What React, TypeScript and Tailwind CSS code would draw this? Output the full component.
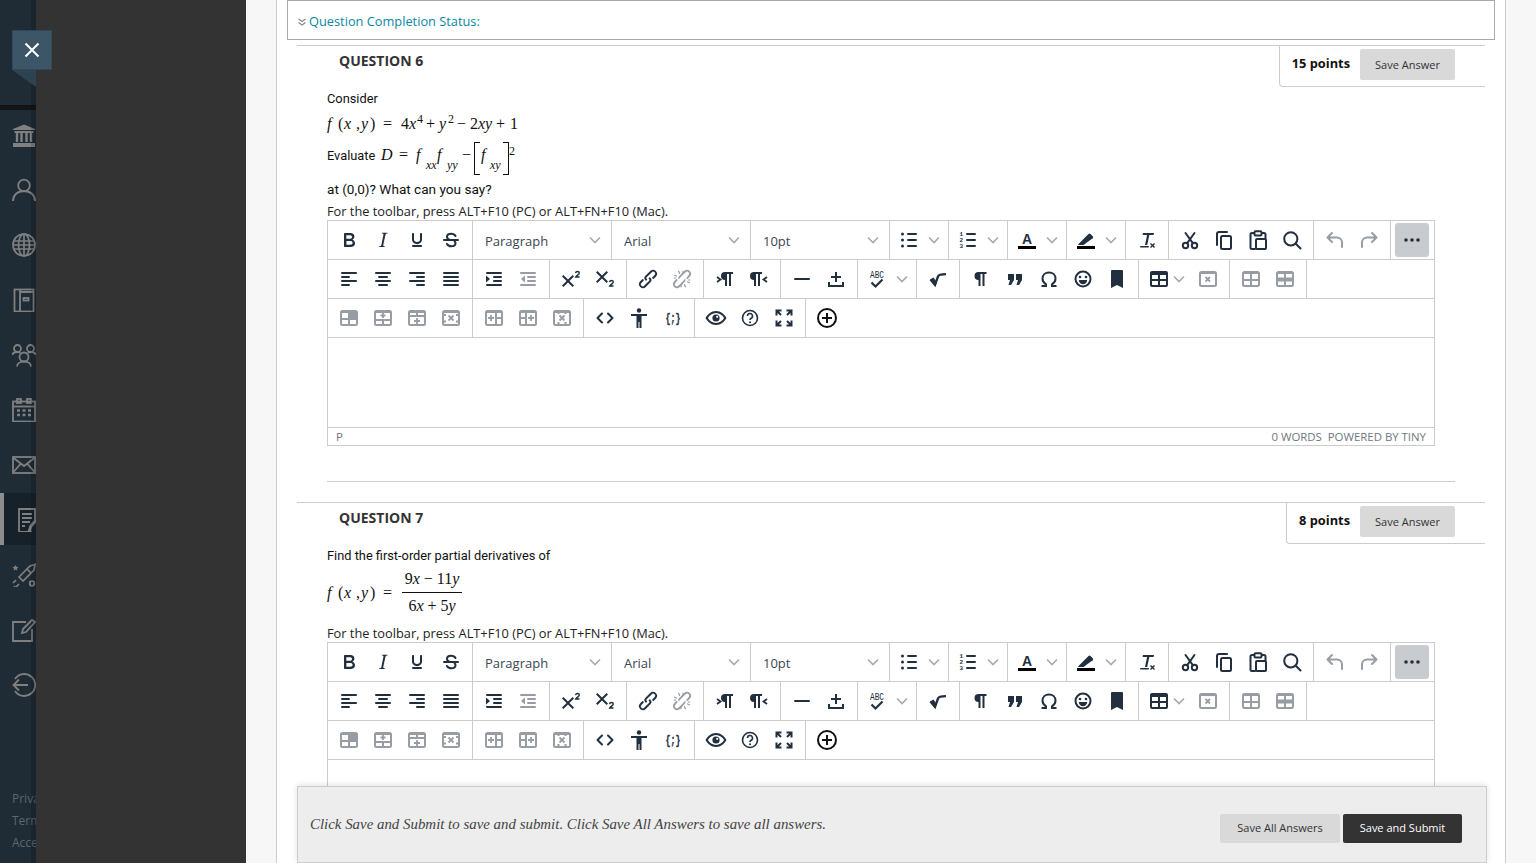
import React from 'react';

const OPEN = { fontFamily: '"Open Sans", sans-serif' };

const Svg = ({ children, size = 24 }: { children: React.ReactNode; size?: number }) => (
  <svg width={size} height={size} viewBox="0 0 24 24" fill="currentColor" stroke="none">{children}</svg>
);
const S = (p: any) => <path fill="none" stroke="currentColor" strokeWidth={2} strokeLinecap="round" strokeLinejoin="round" {...p} />;
const Bars = ({ rows }: { rows: number[][] }) => (
  <>{rows.map((r, i) => <rect key={i} x={r[0]} y={r[1]} width={r[2]} height={2} rx={1} />)}</>
);

const Frame = ({ children }: { children?: React.ReactNode }) => (
  <>
    <rect x="4" y="5" width="16" height="14" rx="1.5" fill="none" stroke="currentColor" strokeWidth="2" />
    <rect x="4" y="5" width="16" height="2" />
    {children}
  </>
);
const Grid = () => <S d="M12 5v14M4 13h16" strokeLinecap="butt" />;

const Pilcrow = ({ dx = 0 }: { dx?: number }) => <path transform={`translate(${dx} 0)`} d="M10 5h9v2h-2v12h-2V7h-2v12h-2v-6a4 4 0 0 1 0-8z" />;
const LINK = 'M6.2 12.3a1 1 0 0 1 1.4 1.4l-2 2a2 2 0 1 0 2.8 2.8l4.8-4.8a1 1 0 0 0 0-1.4 1 1 0 1 1 1.4-1.3 2.9 2.9 0 0 1 0 4L9.8 19.9a3.9 3.9 0 0 1-5.6-5.6l2-2zm11.6-.6a1 1 0 0 1-1.4-1.4l2-2a2 2 0 1 0-2.8-2.8L10.6 10.3a1 1 0 0 0 0 1.4 1 1 0 1 1-1.4 1.3 2.9 2.9 0 0 1 0-4l5-4.9a3.9 3.9 0 0 1 5.6 5.6l-2 2z';

const ICONS: Record<string, React.ReactNode> = {
  bold: <path d="M7.8 19c-.3 0-.5 0-.6-.2l-.2-.5V5.7c0-.2 0-.4.2-.5l.6-.2h5c1.5 0 2.7.3 3.5 1 .7.6 1.1 1.4 1.1 2.5a3 3 0 0 1-.6 1.9c-.4.6-1 1-1.6 1.2.4.1.9.3 1.3.6s.8.7 1 1.2c.4.4.5 1 .5 1.6 0 1.3-.4 2.3-1.3 3-.8.7-2.1 1-3.8 1H7.8zm5-8.3c.6 0 1.2-.1 1.6-.5.4-.3.6-.7.6-1.3 0-1.1-.8-1.7-2.3-1.7H9.3v3.5h3.4zm.5 6c.7 0 1.3-.1 1.7-.4.4-.4.6-.9.6-1.5s-.2-1-.7-1.4c-.4-.3-1-.4-2-.4H9.4v3.8h4z" />,
  italic: <path d="M16.7 4.7l-.1.9h-.3c-.6 0-1 0-1.4.3-.3.3-.4.6-.5 1.1l-2.1 9.8v.6c0 .5.4.8 1.4.8h.2l-.2.8H8l.2-.8h.2c1.1 0 1.8-.5 2-1.5l2-9.8.1-.5c0-.6-.4-.8-1.4-.8h-.3l.2-.9h5.8z" />,
  underline: <path d="M16 5c.6 0 1 .4 1 1v5.5a4 4 0 0 1-.4 1.8l-1 1.4a5.3 5.3 0 0 1-5.5 1 5 5 0 0 1-1.6-1c-.5-.4-.8-.9-1.1-1.4a4 4 0 0 1-.4-1.8V6c0-.6.4-1 1-1s1 .4 1 1v5.5c0 .3 0 .6.2 1l.6.7a3.3 3.3 0 0 0 2.2.8 3.4 3.4 0 0 0 2.2-.8c.3-.2.4-.5.6-.8l.2-.9V6c0-.6.4-1 1-1zM8 17h8c.6 0 1 .4 1 1s-.4 1-1 1H8a1 1 0 0 1 0-2z" />,
  strike: <><S d="M16.5 8c-.8-1.5-2.3-2.3-4.3-2.3-2.6 0-4.2 1.3-4.2 3.1 0 1.2.6 2.2 2.4 2.9M8 16c.8 1.5 2.3 2.3 4.3 2.3 2.6 0 4.2-1.2 4.2-3 0-.8-.3-1.5-.9-2.1" /><rect x="4" y="11" width="16" height="2" rx="1" /></>,
  bullist: <><circle cx="5.5" cy="6" r="1.5" /><circle cx="5.5" cy="12" r="1.5" /><circle cx="5.5" cy="18" r="1.5" /><Bars rows={[[10, 5, 10], [10, 11, 10], [10, 17, 10]]} /></>,
  numlist: <><text x="3.6" y="8" fontSize="6" fontFamily="Liberation Mono" fontWeight="700">1</text><text x="3.6" y="14" fontSize="6" fontFamily="Liberation Mono" fontWeight="700">2</text><text x="3.6" y="20" fontSize="6" fontFamily="Liberation Mono" fontWeight="700">3</text><Bars rows={[[10, 5, 10], [10, 11, 10], [10, 17, 10]]} /></>,
  textcolor: <><text x="12" y="16" textAnchor="middle" fontSize="14" fontWeight="700" fontFamily="Liberation Sans">A</text><rect x="3" y="18" width="18" height="3" fill="#000" /></>,
  highlight: <><path d="M5 15.5L14.5 6a1.5 1.5 0 0 1 2 0l2.2 2.2a1.5 1.5 0 0 1 0 2L9.5 17H4z" /><rect x="3" y="18" width="18" height="3" fill="#000" /></>,
  clear: <><path d="M8 5h11l-.4 2h-4.3l-2.1 10H10l2.1-10H7.6z" /><rect x="5" y="18" width="9" height="1.6" rx=".8" /><path d="M15.5 15.5l4 4M19.5 15.5l-4 4" stroke="currentColor" strokeWidth="1.4" /></>,
  cut: <><circle cx="7.5" cy="17.5" r="2.7" fill="none" stroke="currentColor" strokeWidth="2" /><circle cx="16.5" cy="17.5" r="2.7" fill="none" stroke="currentColor" strokeWidth="2" /><S d="M9 15.3L16.5 5M15 15.3L7.5 5" /></>,
  copy: <><rect x="9" y="8" width="10" height="13" rx="1.5" fill="none" stroke="currentColor" strokeWidth="2" /><S d="M15 4H7a2 2 0 0 0-2 2v11" /></>,
  paste: <><S d="M8 5H6a1.5 1.5 0 0 0-1.5 1.5v13A1.5 1.5 0 0 0 6 21h3M16 5h2a1.5 1.5 0 0 1 1.5 1.5V10" /><rect x="8.5" y="3.2" width="7" height="4.2" rx="1" fill="none" stroke="currentColor" strokeWidth="2" /><rect x="10" y="11" width="10" height="10" rx="1" fill="none" stroke="currentColor" strokeWidth="2" /></>,
  search: <><circle cx="10.8" cy="10.8" r="6.6" fill="none" stroke="currentColor" strokeWidth="2" /><S d="M15.8 15.8L20.5 20.5" /></>,
  undo: <S d="M9 5L4.5 9.5 9 14M5 9.5h9a5 5 0 0 1 5 5v4.5" />,
  redo: <S d="M15 5l4.5 4.5L15 14M19 9.5h-9a5 5 0 0 0-5 5v4.5" />,
  more: <><circle cx="6" cy="12" r="1.8" /><circle cx="12" cy="12" r="1.8" /><circle cx="18" cy="12" r="1.8" /></>,
  alignleft: <Bars rows={[[4, 5, 16], [4, 9, 9], [4, 13, 16], [4, 17, 9]]} />,
  aligncenter: <Bars rows={[[4, 5, 16], [7, 9, 10], [4, 13, 16], [7, 17, 10]]} />,
  alignright: <Bars rows={[[4, 5, 16], [11, 9, 9], [4, 13, 16], [11, 17, 9]]} />,
  justify: <Bars rows={[[4, 5, 16], [4, 9, 16], [4, 13, 16], [4, 17, 16]]} />,
  indent: <><Bars rows={[[4, 5, 16], [11, 9, 9], [11, 13, 9], [4, 17, 16]]} /><path d="M4 8.5l4 3.5-4 3.5z" /></>,
  outdent: <><Bars rows={[[4, 5, 16], [11, 9, 9], [11, 13, 9], [4, 17, 16]]} /><path d="M9 8.5L5 12l4 3.5z" /></>,
  sup: <><path d="M15 9.4L10.4 14l4.6 4.6-1.4 1.4L9 15.4 4.4 20 3 18.6 7.6 14 3 9.4 4.4 8 9 12.6 13.6 8z" /><path d="M16.5 6.2c.2-1 1-1.7 2-1.7s1.8.7 1.8 1.6c0 1.4-2.4 2.2-3.5 3.9h3.7" fill="none" stroke="currentColor" strokeWidth="1.4" /></>,
  sub: <><path d="M15 5.4L10.4 10l4.6 4.6-1.4 1.4L9 11.4 4.4 16 3 14.6 7.6 10 3 5.4 4.4 4 9 8.6 13.6 4z" /><path d="M16.5 15.2c.2-1 1-1.7 2-1.7s1.8.7 1.8 1.6c0 1.4-2.4 2.2-3.5 3.9h3.7" fill="none" stroke="currentColor" strokeWidth="1.4" /></>,
  link: <path d={LINK} />,
  unlink: <><path d={LINK} /><path d="M7 17L17 7" stroke="#fff" strokeWidth="4" /><path d="M4 8l3 1.2M8.5 3.8L9.7 7M20 16l-3-1.2M15.5 20.2L14.3 17M3.8 11h2.4M13 3.8v2.4M20.2 13h-2.4M11 20.2v-2.4" stroke="currentColor" strokeWidth="1.2" /></>,
  ltr: <><Pilcrow dx={1} /><path d="M4 10l3.500 2.500L4 15" fill="none" stroke="currentColor" strokeWidth="1.800" /></>,
  rtl: <><Pilcrow dx={-4} /><path d="M20 10l-3.500 2.500L20 15" fill="none" stroke="currentColor" strokeWidth="1.800" /></>,
  hr: <rect x="4" y="11" width="16" height="2" rx="1" />,
  pagebreak: <><path d="M11 5h2v4h4v2h-4v4h-2v-4H7V9h4z" /><path d="M4 15h2v3h12v-3h2v5H4z" /></>,
  spell: <><text x="12" y="10.500" textAnchor="middle" fontSize="10.500" textLength="14" lengthAdjust="spacingAndGlyphs" fontFamily="Liberation Mono">ABC</text><path d="M6.500 15.500l4 4L17.500 12.500" fill="none" stroke="currentColor" strokeWidth="2.200" /></>,
  sqrt: <><path d="M4.500 12.500L9 18l3-8.500c.5-1.500 2-2.300 8-2.300" fill="none" stroke="currentColor" strokeWidth="2.300" /><path d="M4 12.500l3.500-2 3.500 5L9 19z" /></>,
  para: <Pilcrow dx={-1.5} />,
  quote: <path d="M5 7h6v6l-3 5H5.5L7 13H5zM13 7h6v6l-3 5h-2.500L15 13h-2z" />,
  omega: <S d="M4.5 19H9v-1.700C6.800 16 5.500 14 5.500 11.500 5.500 8 8.200 5.500 12 5.500s6.500 2.500 6.500 6c0 2.500-1.300 4.500-3.500 5.800V19h4.500" strokeLinecap="butt" strokeLinejoin="miter" />,
  emoji: <><circle cx="12" cy="12" r="7.500" fill="none" stroke="currentColor" strokeWidth="2" /><circle cx="9" cy="10" r="1.300" /><circle cx="15" cy="10" r="1.300" /><path d="M7.800 13h8.400a4.200 4.200 0 0 1-8.400 0z" /></>,
  bookmark: <path d="M6 4a1 1 0 0 1 1-1h10a1 1 0 0 1 1 1v17l-6-3-6 3z" />,
  table: <path fillRule="evenodd" d="M19 4a2 2 0 0 1 2 2v12a2 2 0 0 1-2 2H5a2 2 0 0 1-2-2V6c0-1.100.900-2 2-2h14zM5 14v4h6v-4H5zm14 0h-6v4h6v-4zm0-6h-6v4h6V8zM5 12h6V8H5v4z" />,
  tdel: <Frame><path d="M9.500 10l4.500 4.500M14 10l-4.500 4.500" stroke="currentColor" strokeWidth="1.800" /></Frame>,
  tprops: <Frame><Grid /></Frame>,
  tcell: <Frame><rect x="4" y="10.500" width="16" height="4" /><path d="M12 5v14" stroke="currentColor" strokeWidth="2" /></Frame>,
  t1: <Frame><Grid /><rect x="12" y="5" width="8" height="8" /></Frame>,
  t2: <Frame><path d="M4 14h16M12 14v5" stroke="currentColor" strokeWidth="2" /><path d="M12 7v5M9.500 9.500h5" stroke="currentColor" strokeWidth="1.800" /></Frame>,
  t3: <Frame><path d="M4 10h16M12 5v5" stroke="currentColor" strokeWidth="2" /><path d="M12 12v6M9 15h6" stroke="currentColor" strokeWidth="1.800" /></Frame>,
  t4: <Frame><path d="M4 9h3M17 9h3M4 15.500h3M17 15.500h3" stroke="currentColor" strokeWidth="2" /><path d="M9.500 9.500l5 5M14.500 9.500l-5 5" stroke="currentColor" strokeWidth="1.800" /></Frame>,
  t5: <Frame><path d="M14 5v14M14 12h6" stroke="currentColor" strokeWidth="2" /><path d="M9 9v6M6 12h6" stroke="currentColor" strokeWidth="1.800" /></Frame>,
  t6: <Frame><path d="M10 5v14M4 12h6" stroke="currentColor" strokeWidth="2" /><path d="M15 9v6M12 12h6" stroke="currentColor" strokeWidth="1.800" /></Frame>,
  t7: <Frame><path d="M8.500 5v3M15.500 5v3M8.500 16v3M15.500 16v3" stroke="currentColor" strokeWidth="2" /><path d="M9.500 9.500l5 5M14.500 9.500l-5 5" stroke="currentColor" strokeWidth="1.800" /></Frame>,
  code: <S d="M9 7.500L4.500 12 9 16.500M15 7.500l4.500 4.500-4.500 4.500" />,
  a11y: <><circle cx="12" cy="4.500" r="2.200" /><path d="M4 8h16v2h-5.500v12h-2v-6h-1v6h-2V10H4z" /></>,
  template: <text x="12" y="15.500" textAnchor="middle" fontSize="12" fontWeight="700" textLength="15" lengthAdjust="spacingAndGlyphs" stroke="currentColor" strokeWidth=".3" fontFamily="Liberation Mono">{'{;}'}</text>,
  eye: <><path fillRule="evenodd" d="M12 5c4.800 0 8.700 3.400 10.500 7-1.800 3.600-5.700 7-10.500 7S3.300 15.600 1.500 12C3.300 8.400 7.200 5 12 5zm0 2c-3.500 0-6.500 2.300-8.100 5 1.600 2.700 4.600 5 8.100 5s6.500-2.300 8.100-5c-1.600-2.700-4.600-5-8.100-5z" /><circle cx="12" cy="12" r="3.600" /><circle cx="13.200" cy="10.800" r="1.100" fill="#fff" /></>,
  help: <><circle cx="12" cy="12" r="7.500" fill="none" stroke="currentColor" strokeWidth="1.600" /><path d="M9.500 10a2.500 2.500 0 1 1 3.700 2.200c-.8.500-1.200 1-1.200 1.800" fill="none" stroke="currentColor" strokeWidth="1.600" /><circle cx="12" cy="16.300" r="1" /></>,
  fullscreen: <g fill="none" stroke="currentColor" strokeWidth="2"><path d="M4.500 9.500V4.500h5M4.500 4.500l4.500 4.500M14.500 4.500h5v5M19.500 4.500L15 9M4.500 14.500v5h5M4.500 19.500L9 15M14.500 19.500h5v-5M19.500 19.500L15 15" /></g>,
  plus: <g color="#111"><circle cx="12" cy="12" r="9" fill="none" stroke="currentColor" strokeWidth="2" /><path d="M12 7v10M7 12h10" stroke="currentColor" strokeWidth="2" /></g>,
};

const Btn = ({ n, off }: { n: string; off?: boolean }) => (
  <div className={`w-[34px] h-[34px] flex items-center justify-center ${off ? 'text-[#989da3]' : 'text-[#222f3e]'}`}>
    <Svg>{ICONS[n]}</Svg>
  </div>
);

const Chev = () => (
  <svg width="12" height="8" viewBox="0 0 12 8" className="text-[#a6aaaf] shrink-0">
    <path d="M1 1.500L6 6.500 11 1.500" fill="none" stroke="currentColor" strokeWidth="1.600" />
  </svg>
);

const Split = ({ n }: { n: string }) => (
  <div className="flex items-center text-[#222f3e] h-[34px]">
    <div className="w-[30px] flex justify-center shrink-0"><Svg>{ICONS[n]}</Svg></div>
    <div className="w-[20px] flex justify-center shrink-0"><Chev /></div>
  </div>
);

const Group = ({ children, last }: { children: React.ReactNode; last?: boolean }) => (
  <div className={`flex items-center px-1 ${last ? '' : 'border-r border-[#ccc]'}`}>{children}</div>
);

const Select = ({ label }: { label: string }) => (
  <Group>
    <div className="w-[130px] h-[34px] flex items-center justify-between pl-2 pr-[6px] text-[13px] text-[#3a4653]" style={OPEN}>
      <span className="mt-1">{label}</span><Chev />
    </div>
  </Group>
);

const Row = ({ children }: { children: React.ReactNode }) => (
  <div className="flex h-[39px] border-b border-[#ccc] bg-white">{children}</div>
);

const Btns = ({ names, off }: { names: string[]; off?: boolean }) => (
  <Group>{names.map((n) => <Btn key={n} n={n} off={off} />)}</Group>
);

const Editor = ({ status }: { status?: boolean }) => (
  <div className="border border-[#ccc] border-b-0 ml-[30px] mr-[50px] bg-white">
    <Row>
      <Btns names={['bold', 'italic', 'underline', 'strike']} />
      <Select label="Paragraph" />
      <Select label="Arial" />
      <Select label="10pt" />
      <Group><Split n="bullist" /></Group>
      <Group><Split n="numlist" /></Group>
      <Group><Split n="textcolor" /></Group>
      <Group><Split n="highlight" /></Group>
      <Btns names={['clear']} />
      <Btns names={['cut', 'copy', 'paste', 'search']} />
      <Btns names={['undo', 'redo']} off />
      <Group last>
        <div className="w-[34px] h-[34px] bg-[#c8cbcf] rounded-[3px] flex items-center justify-center text-[#222f3e]"><Svg>{ICONS.more}</Svg></div>
      </Group>
    </Row>
    <Row>
      <Btns names={['alignleft', 'aligncenter', 'alignright', 'justify']} />
      <Group><Btn n="indent" /><Btn n="outdent" off /></Group>
      <Btns names={['sup', 'sub']} />
      <Group><Btn n="link" /><Btn n="unlink" off /></Group>
      <Btns names={['ltr', 'rtl']} />
      <Btns names={['hr', 'pagebreak']} />
      <Group><Split n="spell" /></Group>
      <Btns names={['sqrt']} />
      <Btns names={['para', 'quote', 'omega', 'emoji', 'bookmark']} />
      <Group>
        <div className="flex items-center h-[34px] w-[48px] text-[#222f3e]">
          <div className="w-[32px] flex justify-center shrink-0"><Svg>{ICONS.table}</Svg></div>
          <div className="w-[8px] flex justify-center shrink-0"><Chev /></div>
        </div>
        <Btn n="tdel" off />
      </Group>
      <Btns names={['tprops', 'tcell']} off />
    </Row>
    <Row>
      <Btns names={['t1', 't2', 't3', 't4']} off />
      <Btns names={['t5', 't6', 't7']} off />
      <Btns names={['code', 'a11y', 'template']} />
      <Btns names={['eye', 'help', 'fullscreen']} />
      <Group last><Btn n="plus" /></Group>
    </Row>
    <div className="h-[89px] bg-white" />
    {status && (
      <div className="h-[19px] border-y border-[#ccc] flex items-center justify-between px-2 text-[11.4px] text-[#6f7781]" style={OPEN}>
        <span>P</span>
        <span className="whitespace-pre">0 WORDS  POWERED BY TINY</span>
      </div>
    )}
  </div>
);

const Tok = ({ w, up = 0, small, children, it }: { w: number; up?: number; small?: boolean; it?: boolean; children: React.ReactNode }) => (
  <span
    className={`inline-block shrink-0 ${small ? 'text-[12px]' : 'text-[16px]'} ${it ? 'italic' : ''}`}
    style={{ width: w, position: up ? 'relative' : undefined, top: up ? -up : undefined }}
  >
    {children}
  </span>
);

const FXY = () => (
  <>
    <Tok w={11} it>f</Tok>
    <Tok w={6}>(</Tok>
    <Tok w={12} it>x</Tok>
    <Tok w={5}>,</Tok>
    <Tok w={9} it>y</Tok>
    <Tok w={13}>)</Tok>
    <Tok w={18}>=</Tok>
  </>
);

const Heading = ({ n }: { n: number }) => (
  <div className="pl-[42px] pt-[5px] text-[14px] leading-[20px] font-bold text-[#333]" style={OPEN}>QUESTION {n}</div>
);

const Points = ({ label }: { label: string }) => (
  <div className="h-[41px] border-l border-b border-[#ccc] rounded-bl-[4px] flex pl-3 pr-[30px] gap-[10px]" style={OPEN}>
    <span className="text-[12.8px] font-bold text-[#111] leading-[34px]">{label}</span>
    <button className="mt-[3px] w-[95px] h-[31px] pt-[2px] bg-[#d9d9d9] rounded-[2px] text-[11px] text-[#333]">Save Answer</button>
  </div>
);

const QHead = ({ n, points }: { n: number; points: string }) => (
  <div className="flex justify-between h-[41px]"><Heading n={n} /><Points label={points} /></div>
);

const Hint = () => (
  <div className="pl-[30px] h-[18px] leading-[18px] text-[12.8px] text-[#222]" style={OPEN}>
    For the toolbar, press ALT+F10 (PC) or ALT+FN+F10 (Mac).
  </div>
);

const sans = { fontFamily: 'Roboto, "Liberation Sans", sans-serif' };
const times = { fontFamily: '"Liberation Serif", serif' };

const Question6 = () => (
  <section className="border-t border-[#ccc]">
    <QHead n={6} points="15 points" />
    <div className="mt-[2px] pl-[30px] h-[18px] leading-[20px] text-[12.8px] text-[#111]" style={sans}>Consider</div>
    <div className="mt-[6px] pl-[30px] h-[22px] flex items-center text-[#111]" style={times}>
      <FXY />
      <Tok w={8}>4</Tok>
      <Tok w={8} it>x</Tok>
      <Tok w={9} up={5} small>4</Tok>
      <Tok w={13}>+</Tok>
      <Tok w={9} it>y</Tok>
      <Tok w={9} up={5} small>2</Tok>
      <Tok w={13}>−</Tok>
      <Tok w={8}>2</Tok>
      <Tok w={18} it>xy</Tok>
      <Tok w={14}>+</Tok>
      <Tok w={8}>1</Tok>
    </div>
    <div className="mt-[3px] pl-[30px] h-[38px] flex items-center text-[#111]" style={times}>
      <span className="w-[54px] shrink-0 text-[12.8px] -mt-[3px]" style={sans}>Evaluate</span>
      <Tok w={18} up={2} it>D</Tok>
      <Tok w={17} up={2}>=</Tok>
      <Tok w={10} up={2} it>f</Tok>
      <Tok w={11} up={-8} small it>xx</Tok>
      <Tok w={10} up={2} it>f</Tok>
      <Tok w={15} up={-8} small it>yy</Tok>
      <Tok w={12} up={2}>−</Tok>
      <span className="w-[6px] h-[33px] mt-[3px] mr-px border-l border-y border-[#111] shrink-0" />
      <Tok w={9} up={2} it>f</Tok>
      <Tok w={13} up={-8} small it>xy</Tok>
      <span className="w-[6px] h-[33px] mt-[3px] border-r border-y border-[#111] shrink-0" />
      <Tok w={8} up={6} small>2</Tok>
    </div>
    <div className="mt-1 pl-[30px] h-[18px] leading-[18px] text-[13.6px] text-[#111]" style={sans}>at (0,0)? What can you say?</div>
    <div className="mt-1"><Hint /></div>
    <Editor status />
    <div className="mt-[35px] mx-[30px] border-t border-[#ccc]" />
  </section>
);

const Question7 = () => (
  <section className="mt-5 border-t border-[#ccc]">
    <QHead n={7} points="8 points" />
    <div className="mt-[2px] pl-[30px] h-[18px] leading-[20px] text-[12.8px] text-[#111]" style={sans}>Find the first-order partial derivatives of</div>
    <div className="mt-[6px] pl-[30px] h-[46px] flex items-center text-[#111]" style={times}>
      <FXY />
      <span className="ml-px w-[60px] flex flex-col items-center shrink-0 text-[16px]">
        <span className="h-[23px] leading-[18px] w-full text-center border-b border-[#111]">9<i>x</i> − 11<i>y</i></span>
        <span className="h-[23px] leading-[26px]">6<i>x</i> + 5<i>y</i></span>
      </span>
    </div>
    <div className="mt-2"><Hint /></div>
    <Editor />
  </section>
);

const NAV: Record<string, React.ReactNode> = {
  bank: <><path d="M12 1.500L23 6v1H1V6z" /><path d="M2.500 9h19M1 21h22M1 23h22" stroke="currentColor" strokeWidth="2" /><path d="M5 10v9M9.500 10v9M14.500 10v9M19 10v9" stroke="currentColor" strokeWidth="2.400" /></>,
  user: <><circle cx="12" cy="7.500" r="5.800" fill="none" stroke="currentColor" strokeWidth="1.800" /><path d="M1 23c0-6 4.500-10 11-10s11 4 11 10" fill="none" stroke="currentColor" strokeWidth="1.800" /></>,
  globe: <g fill="none" stroke="currentColor" strokeWidth="1.700"><circle cx="12" cy="12" r="11" /><ellipse cx="12" cy="12" rx="5.500" ry="11" /><path d="M12 1v22M1.500 8h21M1.500 12h21M1.500 16h21" /></g>,
  book: <g fill="none" stroke="currentColor" strokeWidth="1.800"><rect x="2.500" y="1.500" width="19" height="22" /><path d="M8 1.500v22M8 4h13.500" /><rect x="11.500" y="10" width="5" height="2.500" /></g>,
  group: <g fill="none" stroke="currentColor" strokeWidth="1.800"><circle cx="5.500" cy="5.500" r="3.500" /><circle cx="18.500" cy="5.500" r="3.500" /><circle cx="12" cy="14" r="4.500" /><path d="M.5 12c0-2 2-3 5-3 1 0 2 .2 3 .7M23.500 12c0-2-2-3-5-3-1 0-2 .2-3 .7M5 23.500c0-3 3-5 7-5s7 2 7 5" /></g>,
  cal: <g fill="none" stroke="currentColor" strokeWidth="1.800"><rect x="1" y="3.500" width="22" height="20" /><path d="M1 8.500h22" /><rect x="5" y="1" width="4" height="4" /><rect x="15" y="1" width="4" height="4" /><path d="M5 12.500h3M10.500 12.500h3M16 12.500h3M5 17h3M10.500 17h3M16 17h3" strokeWidth="2.600" /></g>,
  mail: <g fill="none" stroke="currentColor" strokeWidth="1.800"><rect x="1" y="4" width="22" height="16" /><path d="M1 4.500l11 8.500 11-8.500M1 19.500l8-9M23 19.500l-8-9" /></g>,
  doc: <g fill="none" stroke="currentColor" strokeWidth="1.800"><path d="M14 24H1V1h16v11" /><path d="M4 6h10M4 10h10M4 14h8M4 18h3" /><path d="M11 24l2-6 8-9" strokeWidth="3" /></g>,
  rocket: <g fill="none" stroke="currentColor" strokeWidth="1.700"><path d="M7 14L18 3l5-1.500L22 7 11 18zM7 14l4 4M15 6l4 4" /><path d="M1 20l3-3M4 24l3-3M2 24l1-1" /><circle cx="20" cy="20.500" r="2.300" /><path d="M3.500 2l.9 1.800 2 .3-1.400 1.400.3 2-1.800-1-1.800 1 .3-2L.5 4.100l2-.3z" fill="currentColor" stroke="none" /></g>,
  edit: <g fill="none" stroke="currentColor" strokeWidth="1.800"><path d="M14 4H1v19h19V11" /><path d="M10 15l1-4L20 2l3 2-9 10z" /></g>,
  exit: <g fill="none" stroke="currentColor" strokeWidth="1.800"><path d="M3 6a11 11 0 1 1 0 12" /><path d="M16 12H1.500M7 6.500L1.500 12 7 17.500" /></g>,
};

const NavItem = ({ n, active }: { n: string; active?: boolean }) => (
  <div className={`h-[55px] flex items-center relative text-[#808080] ${active ? 'pl-[18px]' : 'pl-3'}`}>
    {active && <div className="absolute left-0 right-0 top-[1px] h-[52px] bg-[#17212a] border-l-4 border-[#8c8c8c]" />}
    <div className="relative"><Svg>{NAV[n]}</Svg></div>
  </div>
);

const Nav = () => (
  <aside className="w-[36px] shrink-0 h-full bg-[#1f2b35] flex flex-col overflow-hidden relative">
    <div className="h-[105px] shrink-0" />
    <div className="h-[5px] shrink-0 bg-[#141414]" />
    <div className="w-[60px] flex flex-col -mt-[3px] shrink-0">
      {['bank', 'user', 'globe', 'book', 'group', 'cal', 'mail'].map((n) => <NavItem key={n} n={n} />)}
      <NavItem n="doc" active />
      {['rocket', 'edit', 'exit'].map((n) => <NavItem key={n} n={n} />)}
    </div>
    <div className="mt-auto mb-[9px] pl-3 w-[100px] text-[12px] leading-[22px] text-[#5e676e]" style={OPEN}>
      <div>Privacy</div>
      <div>Terms</div>
      <div>Accessibility</div>
    </div>
    <div className="absolute top-0 bottom-0 right-0 w-[5px] bg-black/15" />
  </aside>
);

export default function App() {
  return (
    <div className="h-[863px] w-full overflow-hidden flex relative bg-[#f7f7f7]">
      <Nav />
      <div className="w-[210px] shrink-0 bg-[#333]" />
      <div className="w-[30px] shrink-0" />
      <main className="flex-1 min-w-0 bg-white border-x border-[#ccc] px-[10px]">
        <div className="h-[40px] border border-[#aaa] flex items-center pl-[10px] gap-[3px] pt-[3px]" style={OPEN}>
          <svg width="8" height="8" viewBox="0 0 8 8" className="text-[#888]">
            <path d="M.5 1L4 3.500 7.500 1M.5 4.500L4 7l3.500-2.500" fill="none" stroke="currentColor" strokeWidth="1.200" />
          </svg>
          <span className="text-[12.8px] text-[#0b87a3]">Question Completion Status:</span>
        </div>
        <div className="mt-[5px] mx-[10px]">
          <Question6 />
          <Question7 />
        </div>
      </main>
      <div className="w-[30px] shrink-0" />

      {/* close tab over the nav */}
      <div className="absolute left-3 top-[30px] w-[40px] h-[40px] bg-[#3d5667] border border-[#314858] flex items-center justify-center text-white">
        <svg width="16" height="16" viewBox="0 0 16 16"><path d="M1.500 1.500l13 13M14.500 1.500l-13 13" stroke="currentColor" strokeWidth="2" /></svg>
      </div>
      <svg className="absolute left-3 top-[70px]" width="24" height="18" viewBox="0 0 24 18"><path d="M0 0h24v17z" fill="#2e4351" /></svg>

      {/* submit bar */}
      <div className="absolute left-[297px] top-[786px] w-[1190px] h-[77px] bg-[#ededed] border border-[#ccc] shadow-[0_-1px_6px_rgba(0,0,0,0.12)] flex items-center justify-between pl-3 pr-6">
        <span className="italic text-[14.9px] text-[#444] -mt-[1px]" style={times}>Click Save and Submit to save and submit. Click Save All Answers to save all answers.</span>
        <div className="flex gap-[3px] mt-[7px] text-[11px]" style={OPEN}>
          <button className="w-[120px] h-[29px] bg-[#d9d9d9] rounded-[2px] text-[#333]">Save All Answers</button>
          <button className="w-[119px] h-[29px] bg-[#333] rounded-[2px] text-white">Save and Submit</button>
        </div>
      </div>
    </div>
  );
}
